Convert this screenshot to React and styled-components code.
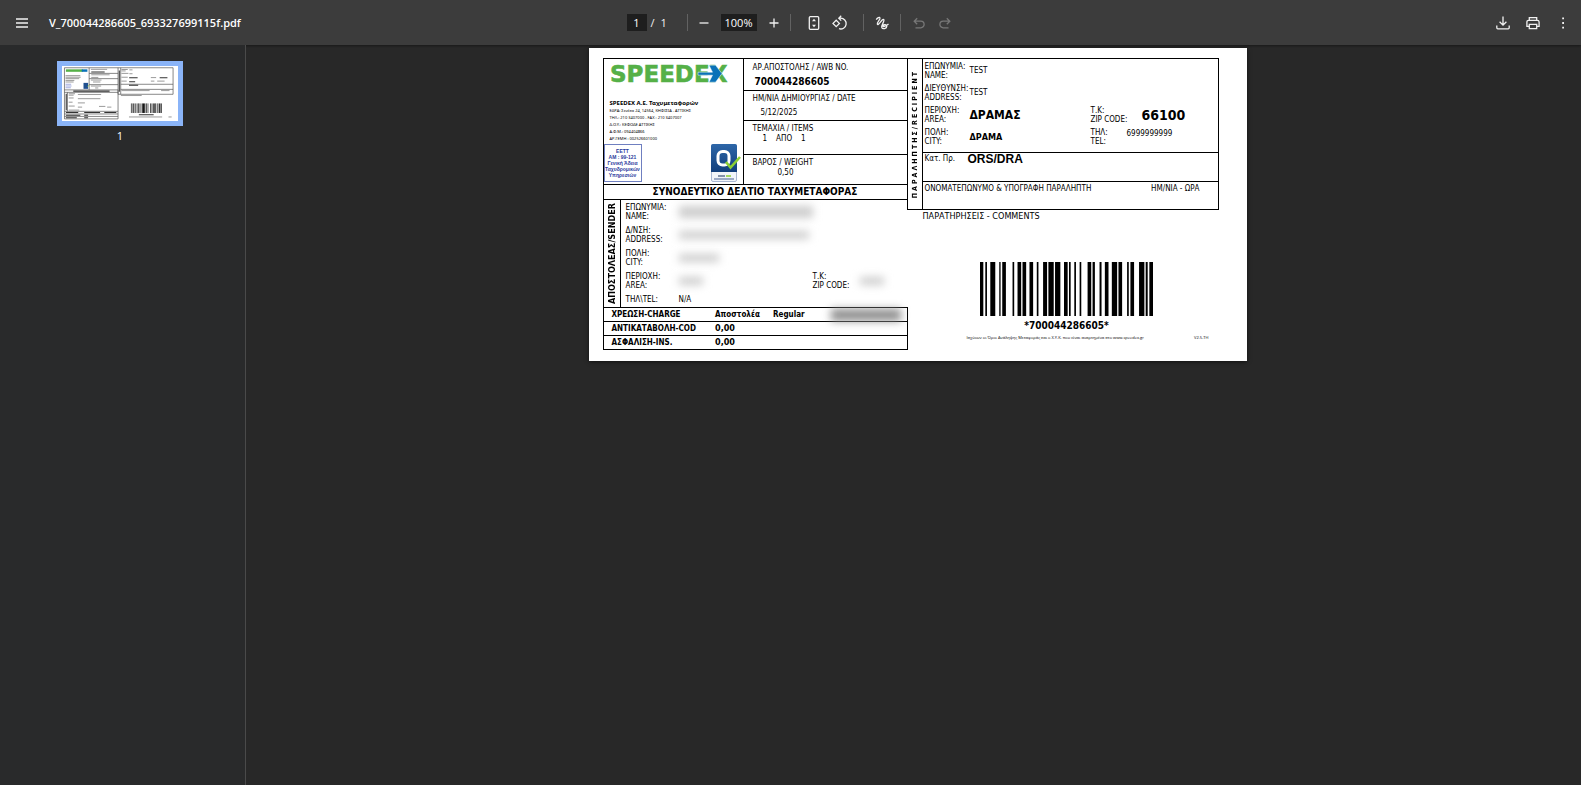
import React from "react";
import styled, { createGlobalStyle } from "styled-components";

const bars = [
  [89, 10], [105, 5], [120, 15], [147, 4], [156, 11], [187, 5], [202, 11],
  [217, 11], [238, 11], [260, 5], [279, 12], [295, 16], [315, 16], [342, 11],
  [357, 5], [373, 5], [389, 5], [413, 11], [428, 7], [449, 6], [465, 11],
  [486, 16], [506, 11], [532, 5], [542, 11], [568, 16], [588, 6], [599, 11],
];

const Barcode = () => (
  <BarcodeSvg viewBox="89 0 521 162" preserveAspectRatio="none">
    {bars.map(([x, w]) => (
      <rect key={x} x={x} y="0" width={w} height="162" />
    ))}
  </BarcodeSvg>
);

const SpeedexLogo = () => (
  <svg width="124" height="30" viewBox="0 0 124 30">
    <text
      x="0"
      y="23"
      fontFamily="DejaVu Sans, sans-serif"
      fontWeight="700"
      fontSize="23"
      fill="#55b047"
      stroke="#55b047"
      strokeWidth=".6"
    >
      SPEEDEX
    </text>
    <path
      d="M88 13.200h14.500L99 6.200h6.500l6.500 8.400-6.500 8.600H99l3.500-7H88z"
      fill="#0a72b8"
      stroke="#fff"
      strokeWidth=".5"
    />
  </svg>
);

const QualityBadge = () => (
  <svg width="30" height="38" viewBox="0 0 30 38">
    <defs>
      <linearGradient id="badge" x1="0" y1="0" x2="0" y2="1">
        <stop offset="0" stopColor="#2d66a8" />
        <stop offset="1" stopColor="#123f7c" />
      </linearGradient>
    </defs>
    <rect x=".5" y=".5" width="25" height="37" rx="1.500" fill="#f2f5fa" stroke="#a9b7d3" />
    <path d="M0 2a2 2 0 0 1 2-2h22a2 2 0 0 1 2 2v26H0z" fill="url(#badge)" />
    <rect x="7" y="7.500" width="11" height="13.500" rx="4.500" fill="none" stroke="#fff" strokeWidth="3" />
    <path d="M15 18l4.500 5.500L29 13" fill="none" stroke="#8ccf33" strokeWidth="2.600" />
    <path d="M7 32h7" stroke="#5f708f" strokeWidth="1.500" />
    <path d="M15 32h5" stroke="#8ccf33" strokeWidth="1.500" />
    <path d="M3 35h20" stroke="#7f90b5" strokeWidth="1.500" />
  </svg>
);

const Icon = ({ children, size = 16 }) => (
  <svg
    width={size}
    height={size}
    viewBox="0 0 16 16"
    fill="none"
    stroke="currentColor"
    strokeWidth="1.300"
    aria-hidden="true"
  >
    {children}
  </svg>
);

const Thumbnail = () => (
  <svg width="116" height="55" viewBox="0 0 658 313" preserveAspectRatio="none">
    <rect width="658" height="313" fill="#fff" />
    <g fill="none" stroke="#555" strokeWidth="4">
      <path d="M14 10H630V161H318V10M14 10V301H318V136H14M154 10V136M154 42H318M154 72H318M154 106H318M14 150H318M14 258H318M14 273H318M14 287H318M333 10V161M333 104H630M333 133H630M31 150V258" />
    </g>
    <path d="M22 26h96" stroke="#55b047" strokeWidth="14" />
    <path d="M112 26h32" stroke="#0a72b8" strokeWidth="14" />
    <rect x="122" y="96" width="26" height="34" fill="#1f4f8f" />
    <path d="M146 118l8-10" stroke="#8ccf33" strokeWidth="4" />
    <path d="M20 104h32M20 114h34M20 124h30" stroke="#a4ade0" strokeWidth="6" />
    <g stroke="#8d8d8d" strokeWidth="5">
      <path d="M20 55h84M20 64h86M20 72h78M20 82h50M20 91h46M164 19h92M166 50h104M166 65h40M164 80h60M176 91h42M164 114h58M188 125h18M337 20h36M337 28h24M382 22h18M337 42h40M382 44h18M337 64h36M337 86h30M504 66h30M504 86h20M540 86h42M337 140h160M562 140h48M334 168h118M38 158h36M38 166h28M90 162h132M38 182h28M90 186h128M38 206h22M90 210h40M38 228h34M90 234h24M210 230h36M256 234h24M38 251h60M380 290h188M604 290h18" />
    </g>
    <g stroke="#333" strokeWidth="6">
      <path d="M166 34h76M64 143h206M381 67h48M381 90h34M554 67h44M380 110h52M22 265h70M126 265h90M240 265h68M22 280h82M126 280h22M22 294h62M126 294h22M436 277h84M24 158v94M325 26v120" />
    </g>
    <g transform="translate(391 213) scale(.335 .335)">
      {bars.map(([x, w]) => (
        <rect key={x} x={x - 89} y="0" width={w} height="162" />
      ))}
    </g>
  </svg>
);

const Toolbar = () => (
  <Bar>
    <Start>
      <IconButton aria-label="Menu">
        <Icon>
          <path d="M2 4h12M2 8h12M2 12h12" />
        </Icon>
      </IconButton>
      <FileName>V_700044286605_693327699115f.pdf</FileName>
    </Start>
    <Controls>
      <PageBox aria-label="Page" defaultValue="1" />
      <PageCount>
        <span>/</span>
        <span>1</span>
      </PageCount>
      <Divider />
      <Group $pad={4}>
        <IconButton aria-label="Zoom out">
          <Icon>
            <path d="M3.500 8h9" />
          </Icon>
        </IconButton>
        <ZoomBox aria-label="Zoom" defaultValue="100%" />
        <IconButton aria-label="Zoom in">
          <Icon>
            <path d="M3.500 8h9M8 3.500v9" />
          </Icon>
        </IconButton>
      </Group>
      <Divider />
      <Group $pad={11}>
        <IconButton aria-label="Fit to page">
          <Icon>
            <rect x="3.300" y="1.700" width="9.400" height="12.600" rx="1" />
            <path d="M8 3.800l2 2.400H6zM8 12.200l2-2.400H6z" fill="currentColor" stroke="none" />
          </Icon>
        </IconButton>
        <IconButton aria-label="Rotate">
          <Icon>
            <path d="M4.200 5.200L7.400 8.400 4.200 11.600 1 8.400z" />
            <path d="M7 3.200h1.500a5.400 5.400 0 1 1-1.500 10.500M9.200.8L6.800 3.200l2.400 2.400" />
          </Icon>
        </IconButton>
      </Group>
      <Divider />
      <Group $pad={6}>
        <IconButton aria-label="Draw">
          <Icon>
            <path d="M2.200 4.600C3.500 2.800 5.600 1.600 6 3c.5 1.600-3.600 4.700-2.600 6.300 1.200 1.600 4.800-6 6.300-4.700 1.500 1.300-2.700 5.400-1.900 7.900.7 2 5 1.300 5-1.200 0-2-2.900-2.300-3.700-.7-.8 1.600 2.400 1 5.400-1.500" />
          </Icon>
        </IconButton>
      </Group>
      <Divider />
      <Group $pad={6}>
        <IconButton aria-label="Undo" disabled>
          <Icon>
            <path d="M6.200 3.200L3.200 6.200l3 3M3.400 6.200h6.400a3.200 3.200 0 0 1 0 6.600H4.500" />
          </Icon>
        </IconButton>
        <IconButton aria-label="Redo" disabled>
          <Icon>
            <path d="M9.800 3.200l3 3-3 3M12.600 6.200H6.200a3.200 3.200 0 0 0 0 6.600h5.300" />
          </Icon>
        </IconButton>
      </Group>
    </Controls>
    <End>
      <IconButton aria-label="Download">
        <Icon>
          <path d="M8 1.500v8.500M4.600 6.800L8 10.200l3.400-3.400M1.800 10.500v2.300c0 .7.400 1 1 1h10.400c.6 0 1-.3 1-1v-2.300" />
        </Icon>
      </IconButton>
      <IconButton aria-label="Print">
        <Icon>
          <path d="M4.300 5.300V2.600h7.400v2.700M4.300 11.300H1.900V7c0-1 .7-1.700 1.700-1.700h8.800c1 0 1.700.7 1.700 1.700v4.300h-2.400M4.300 9.400h7.400v4.300H4.300z" />
        </Icon>
      </IconButton>
      <IconButton aria-label="More">
        <Icon>
          <path d="M7.200 2.500h1.800v1.800H7.200zM7.200 7.100h1.800v1.800H7.200zM7.200 11.700h1.800v1.800H7.200z" fill="currentColor" stroke="none" />
        </Icon>
      </IconButton>
    </End>
  </Bar>
);

const Pair = ({ first, second }) => (
  <Label>
    {first}
    <br />
    {second}
  </Label>
);

const Voucher = () => (
  <Sheet>
    <Columns>
      <div>
        <Shipment>
          <Company>
            <SpeedexLogo />
            <CompanyName>SPEEDEX Α.Ε. Ταχυμεταφορών</CompanyName>
            <CompanyInfo>
              <span>ΕΔΡΑ: Σενέκα 24, 14564, ΚΗΦΙΣΙΑ - ΑΤΤΙΚΗΣ</span>
              <span>ΤΗΛ.: 210 3407000 - FAX : 210 3407007</span>
              <span>Δ.Ο.Υ.: ΚΕΦΟΔΕ ΑΤΤΙΚΗΣ</span>
              <span>Α.Φ.Μ.: 094404866</span>
              <span>ΑΡ.ΓΕΜΗ : 002526601000</span>
            </CompanyInfo>
            <Stamps>
              <Stamp>
                <span>ΕΕΤΤ</span>
                <span>ΑΜ : 99-121</span>
                <span>Γενική Άδεια</span>
                <span>Ταχυδρομικών</span>
                <span>Υπηρεσιών</span>
              </Stamp>
              <QualityBadge />
            </Stamps>
          </Company>
          <Facts>
            <Fact>
              <Label>ΑΡ.ΑΠΟΣΤΟΛΗΣ / AWB NO.</Label>
              <AwbNumber>700044286605</AwbNumber>
            </Fact>
            <Fact>
              <Label>ΗΜ/ΝΙΑ ΔΗΜΙΟΥΡΓΙΑΣ / DATE</Label>
              <FactValue $indent={8} $drop={4}>5/12/2025</FactValue>
            </Fact>
            <Fact>
              <Label>ΤΕΜΑΧΙΑ / ITEMS</Label>
              <FactValue $indent={10}>
                <span>1</span>
                <span>ΑΠΟ</span>
                <span>1</span>
              </FactValue>
            </Fact>
            <Fact>
              <Label>ΒΑΡΟΣ / WEIGHT</Label>
              <FactValue $indent={25}>0,50</FactValue>
            </Fact>
          </Facts>
        </Shipment>
        <Title>ΣΥΝΟΔΕΥΤΙΚΟ ΔΕΛΤΙΟ ΤΑΧΥΜΕΤΑΦΟΡΑΣ</Title>
        <Sender>
          <Strip>
            <StripText $size={9}>ΑΠΟΣΤΟΛΕΑΣ/SENDER</StripText>
          </Strip>
          <SenderFields>
            <Pair first="ΕΠΩΝΥΜΙΑ:" second="NAME:" />
            <Redacted $width={134} />
            <Pair first="Δ/ΝΣΗ:" second="ADDRESS:" />
            <Redacted $width={130} $thin />
            <Pair first="ΠΟΛΗ:" second="CITY:" />
            <Redacted $width={40} $thin />
            <Pair first="ΠΕΡΙΟΧΗ:" second="AREA:" />
            <SenderZip>
              <Redacted $width={24} $thin />
              <Pair first="Τ.Κ:" second="ZIP CODE:" />
              <Redacted $width={24} $thin />
            </SenderZip>
            <Label>ΤΗΛ\TEL:</Label>
            <Label>N/A</Label>
          </SenderFields>
        </Sender>
        <Charges>
          <tbody>
            <tr>
              <th>ΧΡΕΩΣΗ-CHARGE</th>
              <td>Αποστολέα</td>
              <td>Regular</td>
              <td>
                <Redacted $width={70} $dark />
              </td>
            </tr>
            <tr>
              <th>ΑΝΤΙΚΑΤΑΒΟΛΗ-COD</th>
              <Amount colSpan={3}>0,00</Amount>
            </tr>
            <tr>
              <th>ΑΣΦΑΛΙΣΗ-INS.</th>
              <Amount colSpan={3}>0,00</Amount>
            </tr>
          </tbody>
        </Charges>
      </div>
      <RightSide>
        <Recipient>
          <Strip>
            <StripText $size={7} $tracked>ΠΑΡΑΛΗΠΤΗΣ/RECIPIENT</StripText>
          </Strip>
          <div>
            <RecipientFields>
              <Pair first="ΕΠΩΝΥΜΙΑ:" second="NAME:" />
              <WideValue>TEST</WideValue>
              <Pair first="ΔΙΕΥΘΥΝΣΗ:" second="ADDRESS:" />
              <WideValue>TEST</WideValue>
              <Pair first="ΠΕΡΙΟΧΗ:" second="AREA:" />
              <Strong $size={12}>ΔΡΑΜΑΣ</Strong>
              <Pair first="Τ.Κ:" second="ZIP CODE:" />
              <Strong $size={14}>66100</Strong>
              <Pair first="ΠΟΛΗ:" second="CITY:" />
              <Strong $size={9}>ΔΡΑΜΑ</Strong>
              <Pair first="ΤΗΛ:" second="TEL:" />
              <Phone>6999999999</Phone>
            </RecipientFields>
            <Route>
              <Label>Κατ. Πρ.</Label>
              <RouteCode>ORS/DRA</RouteCode>
            </Route>
            <Signature>
              <Label>ΟΝΟΜΑΤΕΠΩΝΥΜΟ & ΥΠΟΓΡΑΦΗ ΠΑΡΑΛΗΠΤΗ</Label>
              <Label>ΗΜ/ΝΙΑ - ΩΡΑ</Label>
            </Signature>
          </div>
        </Recipient>
        <Comments>ΠΑΡΑΤΗΡΗΣΕΙΣ - COMMENTS</Comments>
        <BarcodeBlock>
          <Barcode />
          <BarcodeText>*700044286605*</BarcodeText>
        </BarcodeBlock>
        <Footnote>
          <span>
            Ισχύουν οι Όροι Ανάληψης Μεταφοράς και ο Χ.Υ.Κ. που είναι
            αναρτημένα στο www.speedex.gr
          </span>
          <span>V2.5-TH</span>
        </Footnote>
      </RightSide>
    </Columns>
  </Sheet>
);

const App = () => {
  return (
    <>
      <GlobalStyle />
      <Viewer>
        <Toolbar />
        <Workspace>
          <Sidebar>
            <ThumbButton aria-label="Page 1">
              <Thumbnail />
            </ThumbButton>
            <ThumbNumber>1</ThumbNumber>
          </Sidebar>
          <Canvas>
            <Voucher />
          </Canvas>
        </Workspace>
      </Viewer>
    </>
  );
};

export default App;

const GlobalStyle = createGlobalStyle`
  * {
    box-sizing: border-box;
  }
  body {
    margin: 0;
    background: #282828;
  }
`;

const Viewer = styled.div`
  display: flex;
  flex-direction: column;
  min-height: 100vh;
  font-family: "Open Sans", "Noto Sans", sans-serif;
`;

const Bar = styled.header`
  display: grid;
  grid-template-columns: 1fr auto 1fr;
  align-items: center;
  height: 45px;
  background: #3c3c3c;
  color: #f1f1f1;
  box-shadow: 0 1px 2px rgba(0, 0, 0, 0.4);
`;

const Start = styled.div`
  display: flex;
  align-items: center;
  gap: 15px;
  padding-left: 10px;
`;

const FileName = styled.span`
  font-size: 11px;
  font-weight: 600;
  color: #fff;
`;

const Controls = styled.div`
  display: flex;
  align-items: center;
  padding-left: 8px;
  font-size: 11px;
`;

const End = styled.div`
  display: flex;
  justify-content: flex-end;
  gap: 6px;
  padding-right: 6px;
`;

const Group = styled.div`
  display: flex;
  align-items: center;
  gap: 2px;
  padding: 0 ${(p) => p.$pad}px;
`;

const Divider = styled.span`
  width: 1px;
  height: 17px;
  background: #626262;
`;

const IconButton = styled.button`
  display: flex;
  align-items: center;
  justify-content: center;
  width: 24px;
  height: 24px;
  padding: 0;
  border: 0;
  background: none;
  color: #f1f1f1;

  &:disabled {
    color: #777;
  }
`;

const PageBox = styled.input`
  width: 20px;
  height: 17px;
  padding: 0;
  border: 0;
  background: #1e1e1e;
  color: #fff;
  font-family: inherit;
  font-size: 11px;
  text-align: center;
`;

const ZoomBox = styled(PageBox)`
  width: 36px;
  margin: 0 3px;
`;

const PageCount = styled.span`
  display: flex;
  gap: 6px;
  width: 40px;
  padding-left: 4px;
`;

const Workspace = styled.div`
  display: flex;
  flex: 1;
`;

const Sidebar = styled.aside`
  display: flex;
  flex-direction: column;
  align-items: center;
  width: 246px;
  padding: 16px 5px 0 0;
  border-right: 1px solid #4a4a4a;
  background: #292a2b;
`;

const ThumbButton = styled.button`
  display: flex;
  padding: 0;
  border: 5px solid #8ab4f8;
  background: #fff;
`;

const ThumbNumber = styled.span`
  margin-top: 3px;
  color: #fff;
  font-size: 11px;
  line-height: 14px;
`;

const Canvas = styled.main`
  display: flex;
  flex: 1;
  justify-content: center;
  align-items: flex-start;
  padding: 3px 0 0 8px;
`;

const Sheet = styled.article`
  padding: 10px 28px 11px 14px;
  background: #fff;
  color: #000;
  font-family: "DejaVu Sans Condensed", "DejaVu Sans", sans-serif;
  box-shadow: 0 1px 4px rgba(0, 0, 0, 0.6);
`;

const Columns = styled.div`
  display: grid;
  grid-template-columns: 304px 312px;
  align-items: start;
`;

const Label = styled.span`
  font-size: 8px;
  line-height: 9px;
  white-space: nowrap;
`;

const Shipment = styled.section`
  display: grid;
  grid-template-columns: 140px 1fr;
  border: 1px solid #000;
  border-right: 0;
`;

const Company = styled.div`
  display: flex;
  flex-direction: column;
  border-right: 1px solid #000;
  padding: 0 6px;
`;

const CompanyName = styled.strong`
  margin-top: 10px;
  font-family: "Noto Sans", sans-serif;
  font-size: 6px;
  line-height: 8px;
  white-space: nowrap;
`;

const CompanyInfo = styled.div`
  display: flex;
  flex-direction: column;
  gap: 1px;
  margin-top: 1px;
  font-family: "Noto Sans", sans-serif;
  font-size: 4px;
  line-height: 6px;
  white-space: nowrap;
`;

const Stamps = styled.div`
  display: flex;
  justify-content: space-between;
  margin: 2px -4px 0 -6px;
`;

const Stamp = styled.div`
  display: flex;
  flex-direction: column;
  align-items: center;
  width: 38px;
  padding-top: 3px;
  border: 1px solid #6f7fc0;
  color: #2b3a9c;
  font-family: "Liberation Sans", sans-serif;
  font-size: 5px;
  font-weight: 700;
  line-height: 6px;
  white-space: nowrap;
`;

const Facts = styled.div`
  display: grid;
  grid-template-rows: 31px 30px 34px 30px;
`;

const Fact = styled.div`
  display: flex;
  flex-direction: column;
  padding: 4px 0 0 9px;

  & + & {
    border-top: 1px solid #000;
    padding-top: 3px;
  }
`;

const AwbNumber = styled.strong`
  margin: 3px 0 0 2px;
  font-size: 10px;
  line-height: 14px;
`;

const FactValue = styled.span`
  display: flex;
  gap: 9px;
  margin-top: ${(p) => p.$drop || 0}px;
  padding-left: ${(p) => p.$indent}px;
  font-size: 8px;
  line-height: 12px;
`;

const Title = styled.h1`
  margin: 0;
  border-left: 1px solid #000;
  font-size: 10px;
  line-height: 14px;
  text-align: center;
`;

const Sender = styled.section`
  display: grid;
  grid-template-columns: 17px 1fr;
  border: 1px solid #000;
  border-width: 1px 0 0 1px;
`;

const Strip = styled.div`
  display: flex;
  align-items: center;
  justify-content: center;
  border-right: 1px solid #000;
`;

const StripText = styled.strong`
  writing-mode: vertical-rl;
  transform: rotate(180deg);
  font-size: ${(p) => p.$size}px;
  line-height: 12px;
  letter-spacing: ${(p) => (p.$tracked ? "2px" : "normal")};
  white-space: nowrap;
`;

const SenderFields = styled.div`
  display: grid;
  grid-template-columns: 48px 1fr;
  column-gap: 5px;
  row-gap: 5px;
  align-items: center;
  padding: 3px 5px;
`;

const SenderZip = styled.div`
  display: grid;
  grid-template-columns: 134px 47px 1fr;
  align-items: center;
`;

const Redacted = styled.div`
  width: ${(p) => p.$width}px;
  height: ${(p) => (p.$thin ? 8 : 12)}px;
  background: ${(p) => (p.$dark ? "#8f8f8f" : "#cdcdcd")};
  filter: blur(4px);
`;

const Charges = styled.table`
  width: 305px;
  border-collapse: collapse;
  font-size: 8px;
  line-height: 9px;
  font-weight: 700;

  tr {
    height: 14px;
    border: 1px solid #000;
  }
  th,
  td {
    padding: 0;
    text-align: left;
  }
  th {
    width: 112px;
    padding-left: 8px;
  }
  td:nth-child(2) {
    width: 58px;
  }
  td:nth-child(3) {
    width: 58px;
  }
`;

const Amount = styled.td`
  font-size: 9px;
`;

const RightSide = styled.div`
  display: flex;
  flex-direction: column;
`;

const Recipient = styled.section`
  display: grid;
  grid-template-columns: 15px 1fr;
  border: 1px solid #000;
`;

const RecipientFields = styled.div`
  display: grid;
  grid-template-columns: 45px 121px 51px 1fr;
  row-gap: 4px;
  align-items: center;
  padding: 3px 0 6px 2px;
`;

const WideValue = styled.span`
  grid-column: 2 / -1;
  font-size: 8px;
  line-height: 12px;
`;

const Strong = styled.strong`
  font-size: ${(p) => p.$size}px;
  line-height: 14px;
`;

const Phone = styled.span`
  margin-left: -15px;
  padding-bottom: 8px;
  font-size: 8px;
  line-height: 9px;
`;

const Route = styled.div`
  display: grid;
  grid-template-columns: 43px 1fr;
  align-items: start;
  height: 29px;
  padding: 1px 0 0 2px;
  border-top: 1px solid #000;
`;

const RouteCode = styled.strong`
  font-family: "Liberation Sans", sans-serif;
  font-size: 12px;
  line-height: 10px;
`;

const Signature = styled.div`
  display: flex;
  justify-content: space-between;
  align-items: flex-start;
  height: 28px;
  padding: 2px 18px 0 2px;
  border-top: 1px solid #000;
`;

const Comments = styled.p`
  margin: 1px 0 0 16px;
  font-size: 9px;
  line-height: 11px;
`;

const BarcodeBlock = styled.div`
  display: flex;
  flex-direction: column;
  align-items: center;
  margin-top: 40px;
  padding-left: 8px;
`;

const BarcodeSvg = styled.svg`
  width: 173px;
  height: 54px;
`;

const BarcodeText = styled.strong`
  margin-top: 3px;
  font-size: 10px;
  line-height: 13px;
`;

const Footnote = styled.footer`
  display: flex;
  justify-content: space-between;
  margin-top: 3px;
  padding: 0 10px 0 60px;
  font-family: "Open Sans", sans-serif;
  font-size: 4px;
  line-height: 6px;
  white-space: nowrap;
`;
